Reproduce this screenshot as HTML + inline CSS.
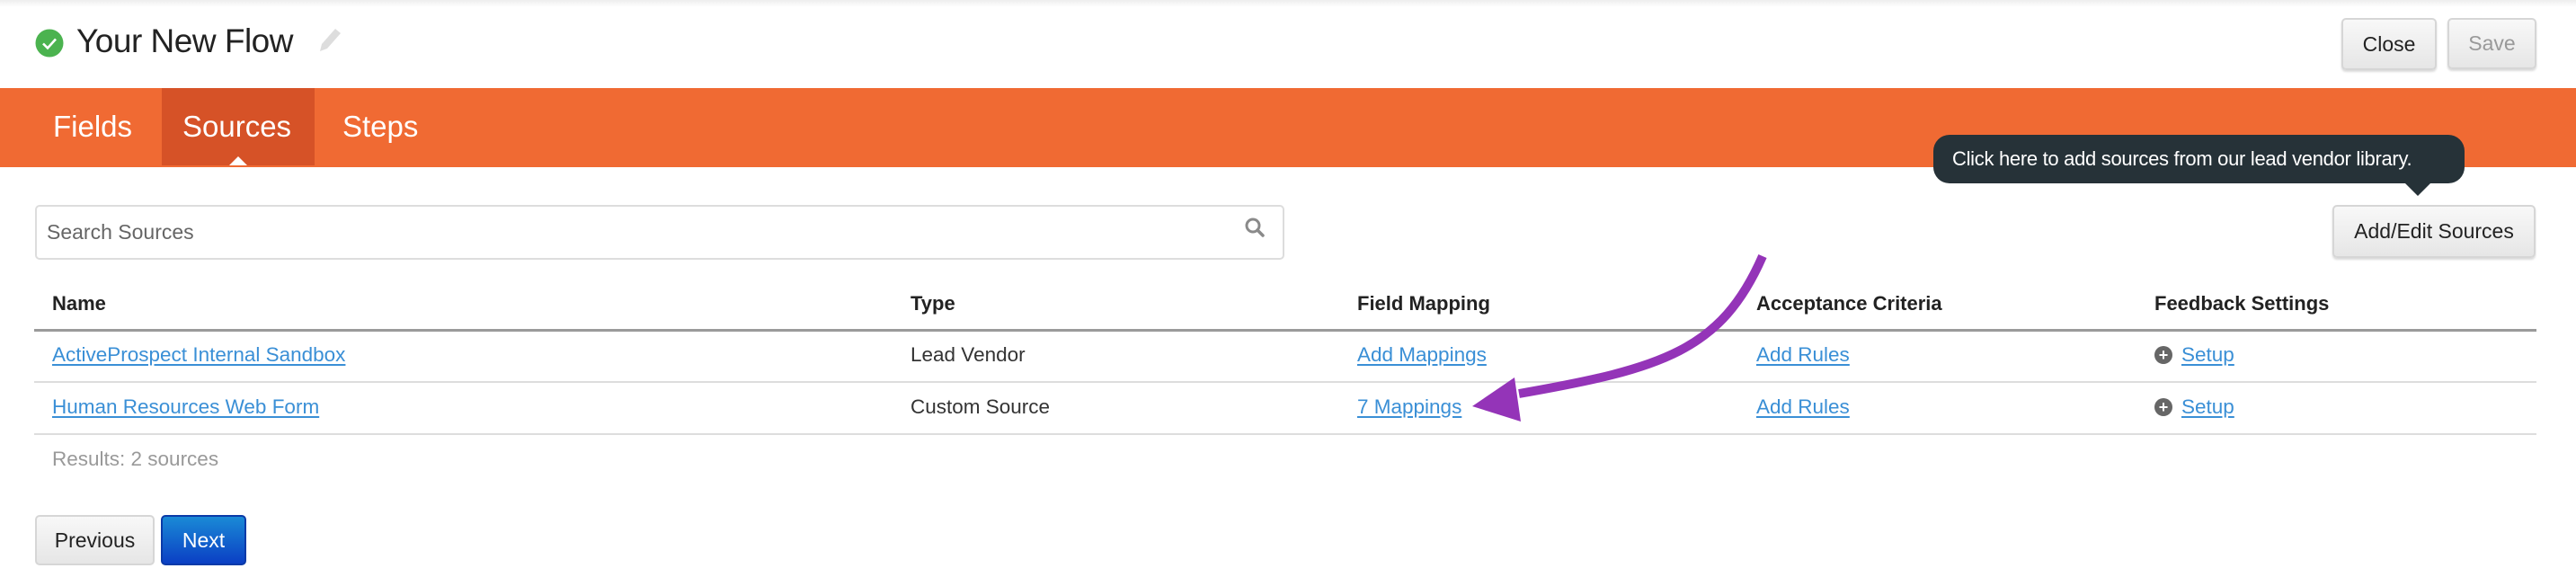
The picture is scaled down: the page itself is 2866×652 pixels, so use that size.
<!DOCTYPE html>
<html><head><meta charset="utf-8"><style>
*{box-sizing:border-box;margin:0;padding:0}
body{width:2866px;height:652px;position:relative;background:#fff;font-family:"Liberation Sans",sans-serif;overflow:hidden}
.abs{position:absolute}
.topsh{left:0;top:0;width:2866px;height:8px;background:linear-gradient(#eee,#fff)}
.btn{position:absolute;border:2px solid #d6d6d6;border-radius:5px;background:linear-gradient(#f8f8f8,#e6e6e6);box-shadow:0 2px 2px rgba(0,0,0,.15);font-size:23px;color:#222;display:flex;align-items:center;justify-content:center}
.bar{left:0;top:98px;width:2866px;height:88px;background:#f06a33}
.tab{position:absolute;top:98px;height:86px;line-height:86px;color:#fff;font-size:33px}
.th{position:absolute;top:325px;font-size:22px;font-weight:bold;color:#222}
.td{position:absolute;font-size:22.5px;color:#333}
.lk{color:#3a8fd6;text-decoration:underline;text-underline-offset:3px}
.line{position:absolute;left:38px;width:2784px}
.pl{display:inline-block;width:20px;height:20px;border-radius:50%;background:#666;color:#fff;font-size:18px;line-height:20px;text-align:center;font-weight:bold;vertical-align:1px;margin-right:10px}
</style></head><body>
<div class="abs topsh"></div>
<svg class="abs" style="left:39px;top:32px" width="32" height="32" viewBox="0 0 32 32"><circle cx="16" cy="16" r="15.5" fill="#4bb34f"/><path d="M9 16.5l5 5 9-10" stroke="#fff" stroke-width="2.6" fill="none"/></svg>
<div class="abs" style="left:85px;top:25px;font-size:37px;color:#222;letter-spacing:-0.5px">Your New Flow</div>
<svg class="abs" style="left:352px;top:29px" width="30" height="30" viewBox="0 0 30 30"><path d="M4 28l2-8L21 3l6 5L12 25z" fill="#ddd"/></svg>
<div class="btn" style="left:2605px;top:20px;width:106px;height:58px">Close</div>
<div class="btn" style="left:2723px;top:20px;width:99px;height:57px;color:#999">Save</div>
<div class="abs bar"></div>
<div class="abs" style="left:180px;top:98px;width:170px;height:86px;background:#d65227"></div>
<div class="tab" style="left:59px">Fields</div>
<div class="tab" style="left:203px">Sources</div>
<div class="tab" style="left:381px">Steps</div>
<div class="abs" style="left:255px;top:174px;width:0;height:0;border-left:10px solid transparent;border-right:10px solid transparent;border-bottom:10px solid #fff"></div>
<div class="abs" style="left:2151px;top:150px;width:591px;height:54px;background:#263238;border-radius:18px;color:#fff;font-size:22px;line-height:54px;padding-left:21px;letter-spacing:-0.3px">Click here to add sources from our lead vendor library.</div>
<div class="abs" style="left:2675px;top:203px;width:0;height:0;border-left:15px solid transparent;border-right:15px solid transparent;border-top:15px solid #263238"></div>
<div class="btn" style="left:2595px;top:228px;width:226px;height:59px">Add/Edit Sources</div>
<div class="abs" style="left:39px;top:228px;width:1390px;height:61px;border:2px solid #ddd;border-radius:5px;font-size:23px;color:#666;line-height:57px;padding-left:11px">Search Sources</div>
<svg class="abs" style="left:1383px;top:240px" width="28" height="28" viewBox="0 0 28 28"><circle cx="11" cy="11" r="7" stroke="#8a8a8a" stroke-width="3" fill="none"/><path d="M16 16l6 6" stroke="#8a8a8a" stroke-width="3.5" stroke-linecap="round"/></svg>
<div class="th" style="left:58px">Name</div>
<div class="th" style="left:1013px">Type</div>
<div class="th" style="left:1510px">Field Mapping</div>
<div class="th" style="left:1954px">Acceptance Criteria</div>
<div class="th" style="left:2397px">Feedback Settings</div>
<div class="line" style="top:366px;height:3px;background:#9a9a9a"></div>
<div class="td" style="left:58px;top:382px"><span class="lk">ActiveProspect Internal Sandbox</span></div>
<div class="td" style="left:1013px;top:382px">Lead Vendor</div>
<div class="td" style="left:1510px;top:382px"><span class="lk">Add Mappings</span></div>
<div class="td" style="left:1954px;top:382px"><span class="lk">Add Rules</span></div>
<div class="td" style="left:2397px;top:382px"><span class="pl">+</span><span class="lk">Setup</span></div>
<div class="line" style="top:424px;height:2px;background:#ddd"></div>
<div class="td" style="left:58px;top:440px"><span class="lk">Human Resources Web Form</span></div>
<div class="td" style="left:1013px;top:440px">Custom Source</div>
<div class="td" style="left:1510px;top:440px"><span class="lk">7 Mappings</span></div>
<div class="td" style="left:1954px;top:440px"><span class="lk">Add Rules</span></div>
<div class="td" style="left:2397px;top:440px"><span class="pl">+</span><span class="lk">Setup</span></div>
<div class="line" style="top:482px;height:2px;background:#ddd"></div>
<div class="td" style="left:58px;top:498px;color:#999">Results: 2 sources</div>
<div class="btn" style="left:39px;top:573px;width:133px;height:56px;box-shadow:none">Previous</div>
<div class="abs" style="left:179px;top:573px;width:95px;height:56px;border-radius:5px;background:linear-gradient(#1a8ad6,#0b3fc4);border:2px solid #0a3aa8;color:#fff;font-size:23px;display:flex;align-items:center;justify-content:center">Next</div>
<svg class="abs" style="left:0;top:0" width="2866" height="652">
<path d="M1961 285 C1915 390 1850 410 1690 438" stroke="#9434b8" stroke-width="10" fill="none"/>
<path d="M1638 452 L1685 420 L1692 469 Z" fill="#9434b8"/>
</svg>
</body></html>
